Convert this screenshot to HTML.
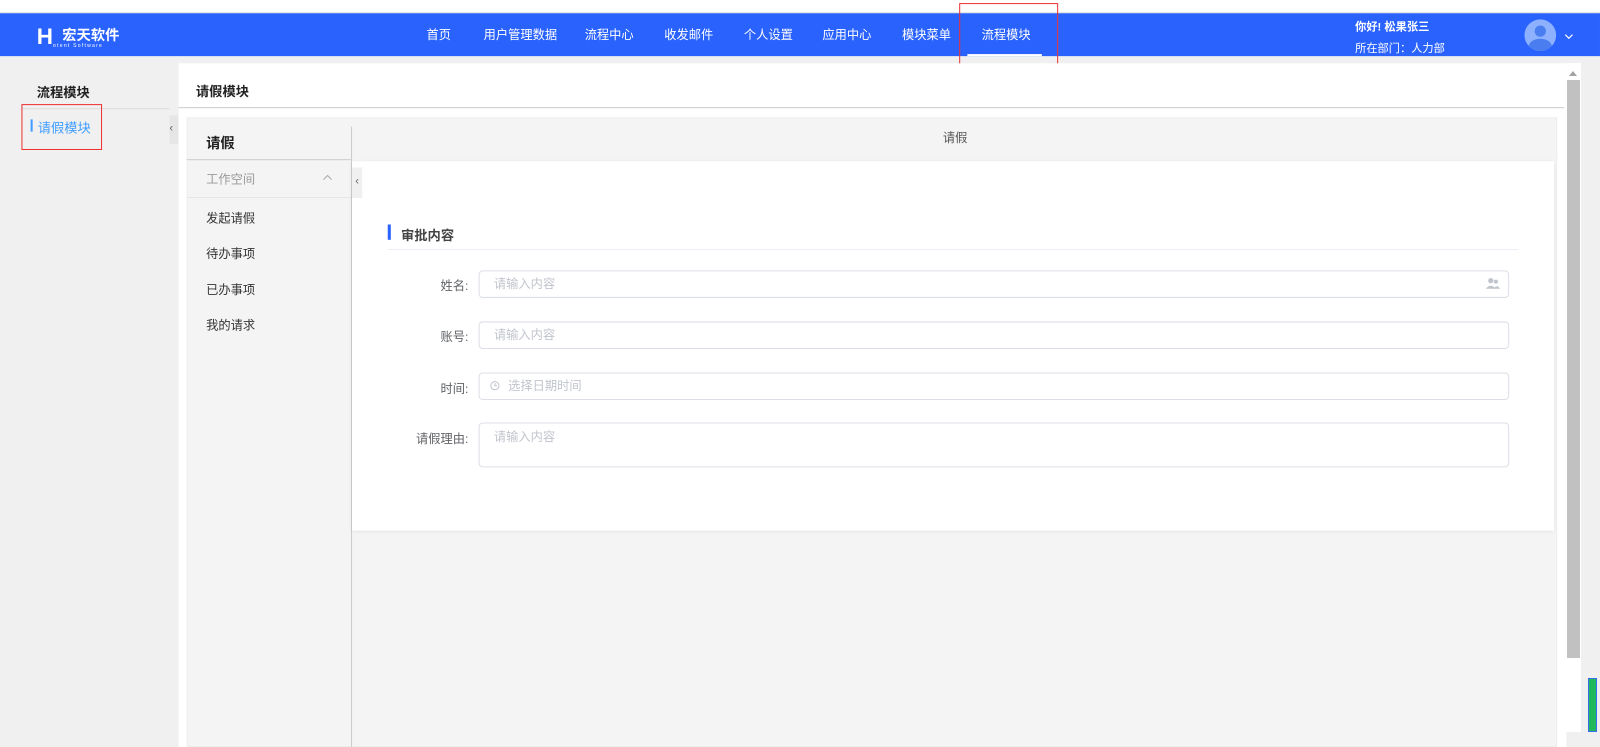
<!DOCTYPE html>
<html><head><meta charset="utf-8"><style>
*{margin:0;padding:0;box-sizing:border-box}
body{width:1600px;height:732px;overflow:hidden;background:#f0f0f0;font-family:"Liberation Sans","Noto Sans CJK SC",sans-serif;font-size:12px;color:#333;position:relative}
#w{position:absolute;left:0;top:0;width:1568px;height:718px;transform:scale(1.0204);transform-origin:0 0}
.a{position:absolute}
.hdr{left:0;top:13px;width:1568px;height:42px;background:#2a62fd}
.nav{top:13px;height:42px;line-height:42px;color:#fff;font-size:12px}
.inp{position:absolute;left:469px;width:1010px;height:27px;border:1px solid #dcdfe6;border-radius:4px;background:#fff;color:#c0c4cc;font-size:12px;line-height:25px;padding-left:14px}
.lbl{position:absolute;width:90px;left:369px;text-align:right;color:#606266;font-size:12px}
.mi{position:absolute;left:202px;font-size:12px;color:#333}
</style></head><body>
<div id="w">
<div class="a" style="left:0;top:0;width:1568px;height:13px;background:#fff;border-bottom:1px solid #ddd"></div>
<div class="a hdr"></div>
<div class="a" style="left:36px;top:25px;color:#fff;font-weight:bold;font-size:22px;line-height:22px;font-family:'Liberation Sans',sans-serif">H</div>
<div class="a" style="left:61px;top:24px;color:#fff;font-weight:bold;font-size:14px">宏天软件</div>
<div class="a" style="left:52px;top:42px;color:#fff;font-size:5px;letter-spacing:1.2px">otent Software</div>
<div class="a nav" style="left:418px">首页</div>
<div class="a nav" style="left:474px">用户管理数据</div>
<div class="a nav" style="left:573px">流程中心</div>
<div class="a nav" style="left:651px">收发邮件</div>
<div class="a nav" style="left:729px">个人设置</div>
<div class="a nav" style="left:806px">应用中心</div>
<div class="a nav" style="left:884px">模块菜单</div>
<div class="a nav" style="left:962px">流程模块</div>
<div class="a" style="left:948px;top:53px;width:73px;height:2px;background:#fff"></div>
<div class="a" style="left:940px;top:3px;width:97px;height:67px;border:1px solid #e33"></div>
<div class="a" style="left:1328px;top:18px;color:#fff;font-weight:bold;font-size:11px">你好! 松果张三</div>
<div class="a" style="left:1328px;top:39px;color:#fff;font-size:11px">所在部门：人力部</div>
<div class="a" style="left:1494px;top:19px;width:31px;height:31px;border-radius:50%;background:#8db1ff;overflow:hidden"><div class="a" style="left:10px;top:6px;width:11px;height:11px;border-radius:50%;background:#4a7ef0"></div><div class="a" style="left:4px;top:19px;width:23px;height:16px;border-radius:50%;background:#4a7ef0"></div></div>
<svg class="a" style="left:1533px;top:33px" width="9" height="6"><path d="M1 1L4.5 4.5L8 1" fill="none" stroke="#fff" stroke-width="1.2"/></svg>

<div class="a" style="left:36px;top:80px;font-size:13px;font-weight:bold;color:#222">流程模块</div>
<div class="a" style="left:20px;top:106px;width:146px;height:1px;background:#ddd"></div>
<div class="a" style="left:30px;top:117px;width:2px;height:12px;background:#409eff"></div>
<div class="a" style="left:37px;top:115px;font-size:13px;color:#409eff">请假模块</div>
<div class="a" style="left:21px;top:102px;width:79px;height:45px;border:1px solid #e33"></div>
<div class="a" style="left:166px;top:113px;width:9px;height:28px;background:#e6e6e6;color:#666;font-size:11px;line-height:26px">‹</div>

<div class="a" style="left:175px;top:62px;width:1360px;height:670px;background:#fff"></div>
<div class="a" style="left:192px;top:79px;font-size:13px;font-weight:bold;color:#222">请假模块</div>
<div class="a" style="left:175px;top:105px;width:1358px;height:1px;background:#ccc"></div>
<div class="a" style="left:183px;top:115px;width:1343px;height:617px;background:#f4f4f4;border:1px solid #eee"></div>
<div class="a" style="left:344px;top:124px;width:1px;height:608px;background:#ccc"></div>
<div class="a" style="left:202px;top:130px;font-size:14px;font-weight:bold;color:#222">请假</div>
<div class="a" style="left:183px;top:156px;width:161px;height:1px;background:#ccc"></div>
<div class="mi" style="top:167px;color:#999">工作空间</div>
<svg class="a" style="left:316px;top:171px" width="10" height="6"><path d="M1 5L5 1L9 5" fill="none" stroke="#aaa"/></svg>
<div class="a" style="left:183px;top:193px;width:161px;height:1px;background:#e6e6e6"></div>
<div class="mi" style="top:205px">发起请假</div>
<div class="mi" style="top:240px">待办事项</div>
<div class="mi" style="top:275px">已办事项</div>
<div class="mi" style="top:310px">我的请求</div>
<div class="a" style="left:924px;top:126px;color:#555;font-size:12px">请假</div>
<div class="a" style="left:345px;top:158px;width:1178px;height:362px;background:#fff;box-shadow:0 1px 4px rgba(0,0,0,.08)"></div>
<div class="a" style="left:345px;top:164px;width:10px;height:30px;background:#f0f0f0;color:#666;font-size:11px;line-height:28px;text-align:center">‹</div>
<div class="a" style="left:380px;top:220px;width:3px;height:15px;background:#2a62fd"></div>
<div class="a" style="left:393px;top:220px;font-size:13px;font-weight:bold;color:#444">审批内容</div>
<div class="a" style="left:380px;top:244px;width:1108px;height:1px;background:#ebeef5"></div>
<div class="lbl" style="top:271px">姓名:</div>
<div class="inp" style="top:265px">请输入内容</div>
<svg class="a" style="left:1456px;top:272px" width="14" height="12"><circle cx="5" cy="3" r="2.6" fill="#c0c4cc"/><path d="M0 11 Q5 5 10 11Z" fill="#c0c4cc"/><circle cx="10" cy="4" r="2" fill="#c0c4cc"/><path d="M8 11 Q11 6 14 11Z" fill="#c0c4cc"/></svg>
<div class="lbl" style="top:321px">账号:</div>
<div class="inp" style="top:315px">请输入内容</div>
<div class="lbl" style="top:372px">时间:</div>
<div class="inp" style="top:365px;padding-left:28px">选择日期时间</div>
<svg class="a" style="left:480px;top:373px" width="10" height="10"><circle cx="5" cy="5" r="4" fill="none" stroke="#c0c4cc"/><path d="M5 2.5V5H7" fill="none" stroke="#c0c4cc"/></svg>
<div class="lbl" style="top:421px">请假理由:</div>
<div class="inp" style="top:414px;height:44px;line-height:26px">请输入内容</div>
</div>

<div class="a" style="left:1565px;top:63px;width:16px;height:669px;background:#fff"></div>
<div class="a" style="left:1569px;top:71px;width:0;height:0;border-left:4px solid transparent;border-right:4px solid transparent;border-bottom:5px solid #a3a3a3"></div>
<div class="a" style="left:1567px;top:80px;width:13px;height:578px;background:#c1c1c1"></div>
<div class="a" style="left:1588px;top:678px;width:9px;height:54px;background:#1fb85a;border:1px solid #3a6cf0"></div>
</body></html>
